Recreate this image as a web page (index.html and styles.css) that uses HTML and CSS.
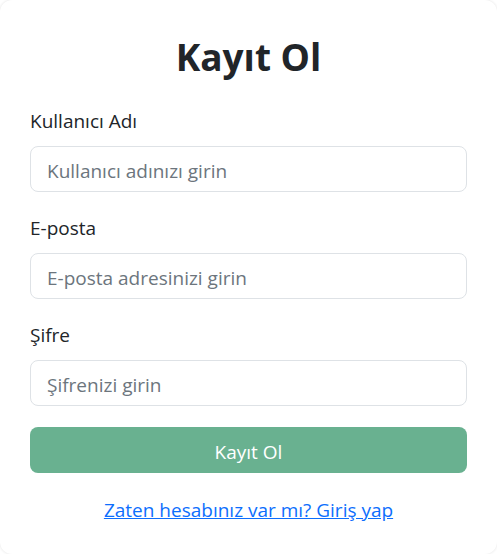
FILE: index.html
```html
<!DOCTYPE html>
<html lang="tr">
<head>
<meta charset="utf-8">
<title>Kayıt Ol</title>
<link rel="stylesheet" href="styles.css">
</head>
<body>
<main class="card">
  <h1 class="title">Kayıt Ol</h1>
  <form class="form">
    <div class="field">
      <label class="label" for="u">Kullanıcı Adı</label>
      <input class="input" id="u" type="text" placeholder="Kullanıcı adınızı girin">
    </div>
    <div class="field">
      <label class="label" for="e">E-posta</label>
      <input class="input" id="e" type="email" placeholder="E-posta adresinizi girin">
    </div>
    <div class="field">
      <label class="label" for="p">Şifre</label>
      <input class="input" id="p" type="password" placeholder="Şifrenizi girin">
    </div>
    <button class="btn" type="button">Kayıt Ol</button>
  </form>
  <p class="footer"><a class="link" href="#">Zaten hesabınız var mı? Giriş yap</a></p>
</main>
</body>
</html>
```
FILE: styles.css
```css
* { box-sizing: border-box; }
html, body { margin: 0; padding: 0; background: #fff; }
body {
  font-family: "Open Sans", "Noto Sans", "Liberation Sans", sans-serif;
  color: #212529;
}
.card {
  height: 554px;
  padding: 32px 30px 0;
  border-radius: 12px;
  box-shadow: 0 0 3px rgba(0,0,0,0.12);
  background: #fff;
}
.title {
  margin: 0 0 26px;
  text-align: center;
  font-size: 37px;
  line-height: 50px;
  font-weight: 700;
}
.form { display: flex; flex-direction: column; }
.field { display: flex; flex-direction: column; margin-bottom: 23px; }
.field:last-of-type { margin-bottom: 21px; }
.label {
  font-size: 19px;
  line-height: 27px;
  margin-bottom: 11px;
}
.input {
  height: 46px;
  padding: 10px 16px 6px;
  font: inherit;
  font-size: 19px;
  line-height: 28px;
  color: #212529;
  border: 1px solid #dee2e6;
  border-radius: 8px;
  background: #fff;
}
.input::placeholder { color: #6c757d; opacity: 1; }
.btn {
  height: 46px;
  padding: 3px 0 0;
  border: 0;
  border-radius: 8px;
  background: #69b190;
  color: #fff;
  font: inherit;
  font-size: 19px;
}
.footer {
  margin: 24px 0 0;
  text-align: center;
  font-size: 19px;
  line-height: 27px;
}
.link { color: #0d6efd; text-decoration: underline; }
```
